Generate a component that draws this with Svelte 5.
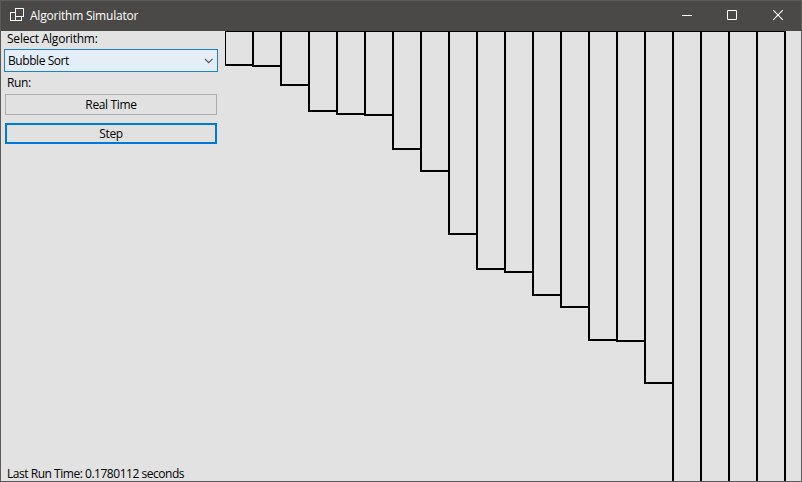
<script>
  const bars = [34, 35, 54, 80, 83, 84, 118, 140, 203, 238, 241, 264, 276, 309, 310, 352, 460, 460, 460, 460];
  let algorithm = $state('Bubble Sort');
</script>

<div class="window">
  <header>
    <svg class="logo" width="14" height="13" viewBox="0 0 14 13" shape-rendering="crispEdges">
      <path d="M5.5 .5h8v8h-8z M5.5 4.5h-5v8h5v-4 M5.5 12.5h6v-4" fill="none" stroke="#fff" />
    </svg>
    <h1>Algorithm Simulator</h1>
    <div class="controls">
      <svg width="46" height="30" viewBox="0 0 46 30"><path d="M19 14.5h10" stroke="#fff" /></svg>
      <svg width="46" height="30" viewBox="0 0 46 30"><path d="M18.5 9.5h9v9h-9z" fill="none" stroke="#fff" /></svg>
      <svg width="46" height="30" viewBox="0 0 46 30"><path d="M18.2 9.2l9.6 9.6M27.8 9.2l-9.6 9.6" stroke="#fff" stroke-width="1.15" /></svg>
    </div>
  </header>
  <main>
    <aside>
      <span class="label select-label">Select Algorithm:</span>
      <div class="combo">
        <span class="value">{algorithm}</span>
        <svg width="9" height="6" viewBox="0 0 9 6"><path d="M.9 .9l3.8 3.8 3.8-3.8" fill="none" stroke="#555" stroke-width="1.2" /></svg>
      </div>
      <span class="label run-label">Run:</span>
      <button class="real">Real Time</button>
      <button class="step">Step</button>
      <span class="label status">Last Run Time: 0.1780112 seconds</span>
    </aside>
    <section>
      <div class="chart">
        {#each bars as h}
          <div class="bar" style:height="{h + 2}px"></div>
        {/each}
      </div>
    </section>
  </main>
</div>

<style>
  .window {
    box-sizing: border-box;
    width: 802px;
    height: 482px;
    border: 1px solid #5a5a5a;
    background: #e2e2e2;
    display: flex;
    flex-direction: column;
    overflow: hidden;
    font: 12px/16px "Open Sans", "Noto Sans", sans-serif;
    color: #000;
  }
  header {
    height: 30px;
    flex: none;
    display: flex;
    background: #4b4947;
    color: #fff;
  }
  .logo { margin: 7px 0 0 9px; }
  h1 {
    font: inherit;
    margin: 7px 0 0 6px;
    letter-spacing: -0.22px;
    white-space: nowrap;
  }
  .controls { margin-left: auto; display: flex; }
  main { flex: 1; min-height: 0; display: flex; }
  aside {
    width: 224px;
    flex: none;
    display: flex;
    flex-direction: column;
    box-sizing: border-box;
    padding-left: 3px;
  }
  .label { margin-left: 3px; white-space: nowrap; letter-spacing: -0.22px; }
  .combo {
    width: 214px;
    height: 23px;
    box-sizing: border-box;
    border: 1px solid #1f80cf;
    background: #e3eef8;
    margin-top: 2px;
    padding: 0 4px 0 3px;
    display: flex;
    align-items: center;
    justify-content: space-between;
    letter-spacing: -0.43px;
  }
  .run-label { margin-top: 3px; letter-spacing: -0.4px; }
  button {
    width: 212px;
    height: 21px;
    margin: 0 0 0 1px;
    padding: 0;
    box-sizing: border-box;
    font: inherit;
    line-height: 17px;
    letter-spacing: -0.35px;
    color: #000;
    background: #e1e1e1;
    border: 1px solid #adadad;
    border-radius: 0;
  }
  .real { margin-top: 3px; }
  .step { margin-top: 8px; border: 2px solid #0078d7; }
  .status { margin: auto 0 -1px 3px; letter-spacing: -0.47px; }
  section { flex: 1; overflow: hidden; }
  .chart { display: flex; align-items: flex-start; margin: -1px 0 0 -1px; }
  .bar {
    width: 30px;
    flex: none;
    box-sizing: border-box;
    border: 2px solid #000;
    margin-right: -2px;
  }
</style>
